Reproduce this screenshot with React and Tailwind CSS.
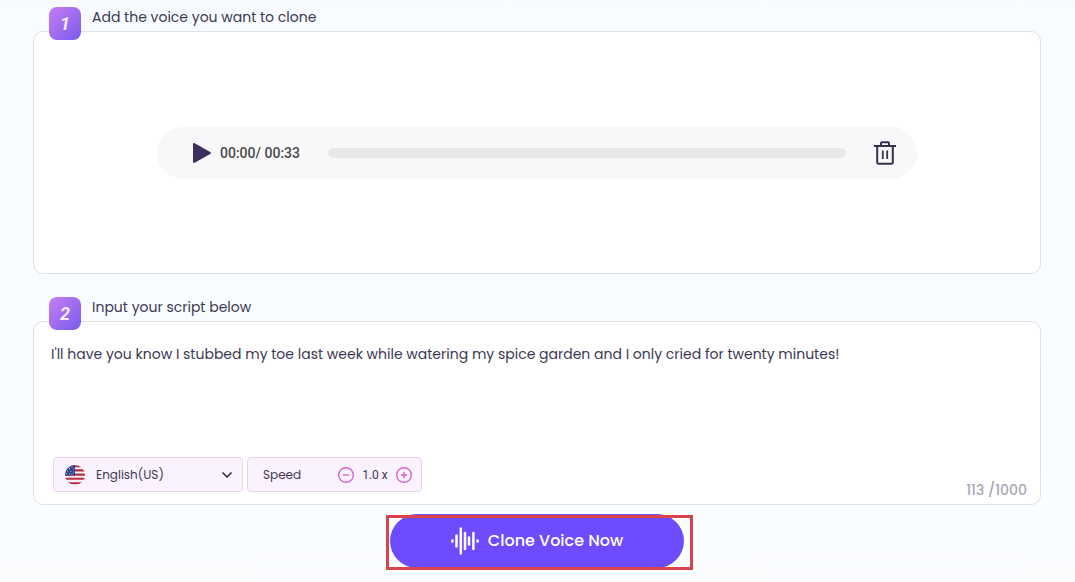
import React, { useState } from 'react';
import { ChevronDown } from 'lucide-react';

const SCRIPT = "I'll have you know I stubbed my toe last week while watering my spice garden and I only cried for twenty minutes!";

const PlayIcon = () => (
  <svg className="w-[18px] h-5" viewBox="0 0 18 20" fill="#3a2f5f">
    <path d="M0 1.2C0 .2.8-.2 1.6.3l15.6 8.8c.9.5.9 1.3 0 1.8L1.6 19.7C.8 20.2 0 19.8 0 18.8z" />
  </svg>
);

const TrashIcon = () => (
  <svg className="w-[22px] h-6" viewBox="0 0 22 24" fill="none" stroke="#35304f" strokeWidth="2" strokeLinejoin="round">
    <path d="M0 5h22" />
    <path d="M7 5V2.2c0-.7.3-1 1-1h6c.7 0 1 .3 1 1V5" />
    <path d="M3.2 5v16.5c0 .8.5 1.3 1.3 1.3h13c.8 0 1.3-.5 1.3-1.3V5" />
    <path d="M8.8 9.5v8.5M13.2 9.5v8.5" strokeWidth="1.8" />
  </svg>
);

const FlagIcon = () => (
  <svg className="w-5 h-5" viewBox="0 0 20 20">
    <defs>
      <clipPath id="flag-circle"><circle cx="10" cy="10" r="10" /></clipPath>
    </defs>
    <g clipPath="url(#flag-circle)">
      <rect width="20" height="20" fill="#f4eef2" />
      <path d="M0 1.2h20M0 5.4h20M0 9.6h20M0 13.8h20M0 18.2h20" stroke="#b92f43" strokeWidth="2.1" />
      <rect width="10" height="10.6" fill="#2d3f84" />
      <g fill="#dfe3f2">
        <circle cx="7" cy="2" r=".6" /><circle cx="4.5" cy="3.6" r=".6" /><circle cx="8.5" cy="4" r=".6" />
        <circle cx="2.6" cy="6" r=".6" /><circle cx="5.8" cy="6" r=".6" /><circle cx="8.6" cy="7" r=".6" />
        <circle cx="1.4" cy="8.8" r=".6" /><circle cx="4.3" cy="8.8" r=".6" /><circle cx="7" cy="9.2" r=".6" />
      </g>
    </g>
  </svg>
);

const WaveIcon = () => (
  <svg className="w-7 h-7" viewBox="0 0 28 28" stroke="#fff" strokeWidth="2.5" strokeLinecap="round">
    <path d="M1.4 13.6v.8M5.5 8.4v11.2M9.8 1.4v25.2M14 6v16M18 10.4v7.2M22.4 6v16M26.6 13.6v.8" />
  </svg>
);

const StepHeader = ({ number, title, htmlFor }) => (
  <div className="relative z-10 flex h-[31px] items-start gap-[11px] pl-4 pt-[7px]">
    <span className="flex h-[33px] w-8 shrink-0 items-center justify-center rounded-lg bg-linear-to-br from-[#c67df0] to-[#7b58ee] font-['Roboto',sans-serif] text-lg font-bold italic text-[#fbe9ff]">
      {number}
    </span>
    <h2 className="text-sm leading-5 text-[#3b3853]">
      {htmlFor ? <label htmlFor={htmlFor}>{title}</label> : title}
    </h2>
  </div>
);

const SpeedButton = ({ label, plus, onClick }) => (
  <button type="button" aria-label={label} onClick={onClick} className="cursor-pointer">
    <svg className="block w-4 h-4" viewBox="0 0 16 16" fill="none" stroke="#d765cf" strokeWidth="1.4">
      <circle cx="8" cy="8" r="7.3" />
      <path d={plus ? 'M4.8 8h6.4M8 4.8v6.4' : 'M4.8 8h6.4'} />
    </svg>
  </button>
);

const App = () => {
  const [text, setText] = useState(SCRIPT);
  const [speed, setSpeed] = useState(1);
  const [position, setPosition] = useState(0);

  return (
    <main className="min-h-screen bg-linear-to-b from-[#f8fbff] to-[#fbfdff] pb-3 pl-[33px] pr-[34px] font-['Poppins','Inter',sans-serif] text-[#3b3853]">
      {/* Voice sample */}
      <section>
        <StepHeader number="1" title="Add the voice you want to clone" />
        <div className="rounded-[10px] border border-[#dfe0ea] bg-white px-4 pb-[94px] pt-[95px]">
          <div className="mx-auto flex h-[52px] max-w-[760px] items-center rounded-full bg-[#f8f8fa] pl-9 pr-[21px]">
            <button type="button" aria-label="Play" className="cursor-pointer"><PlayIcon /></button>
            <span className="ml-[9px] whitespace-nowrap font-['Roboto',sans-serif] text-sm font-medium text-[#4a4a4a]">
              00:00/ 00:33
            </span>
            <input
              type="range"
              aria-label="Playback position"
              min="0"
              max="33"
              value={position}
              onChange={(e) => setPosition(Number(e.target.value))}
              className="ml-7 mr-7 h-[10px] min-w-0 flex-1 cursor-pointer appearance-none rounded-full bg-[#e9e9e9] [&::-webkit-slider-thumb]:appearance-none"
            />
            <button type="button" aria-label="Delete" className="cursor-pointer"><TrashIcon /></button>
          </div>
        </div>
      </section>

      {/* Script */}
      <section className="mt-4">
        <StepHeader number="2" title="Input your script below" htmlFor="script" />
        <div className="rounded-[10px] border border-[#dfe0ea] bg-white pb-1 pl-[17px] pr-[13px] pt-[22px]">
          <textarea
            id="script"
            value={text}
            maxLength={1000}
            onChange={(e) => setText(e.target.value)}
            className="block h-[113px] w-full resize-none text-sm leading-5 outline-none"
          />
          <div className="flex items-start gap-1 pl-[2px]">
            <div className="relative mb-2 w-[190px]">
              <span className="pointer-events-none absolute inset-y-0 left-3 flex items-center"><FlagIcon /></span>
              <select
                aria-label="Language"
                className="block h-[35px] w-full cursor-pointer appearance-none rounded border border-[#ebd3f0] bg-[#fbf2ff] pl-[42px] pr-8 text-xs"
              >
                <option>English(US)</option>
              </select>
              <ChevronDown className="pointer-events-none absolute right-2 top-[10px] h-4 w-4 text-[#35304f]" strokeWidth={2.6} />
            </div>
            <div className="flex h-[35px] w-[175px] items-center rounded border border-[#ebd3f0] bg-[#fbf2ff] pl-[15px] pr-[9px] text-xs">
              <span className="flex-1">Speed</span>
              <SpeedButton label="Decrease speed" onClick={() => setSpeed(Math.max(0.5, speed - 0.1))} />
              <span className="w-[42px] text-center font-['Roboto',sans-serif]">{speed.toFixed(1)} x</span>
              <SpeedButton label="Increase speed" plus onClick={() => setSpeed(Math.min(2, speed + 0.1))} />
            </div>
            <span className="ml-auto self-end text-sm leading-5 font-medium text-[#aaa7b5]">{text.length} /1000</span>
          </div>
        </div>
      </section>

      {/* Submit */}
      <div className="relative mx-auto mt-[9px] w-[294px]">
        <button
          type="button"
          className="flex h-[54px] w-full cursor-pointer items-center justify-center gap-[9px] rounded-full bg-[#6d4cff] text-base font-medium text-white"
        >
          <WaveIcon />
          Clone Voice Now
        </button>
        <div className="pointer-events-none absolute -bottom-[2px] -left-1 -right-[9px] top-px border-3 border-[#d9434c]" />
      </div>
    </main>
  );
};

export default App;
